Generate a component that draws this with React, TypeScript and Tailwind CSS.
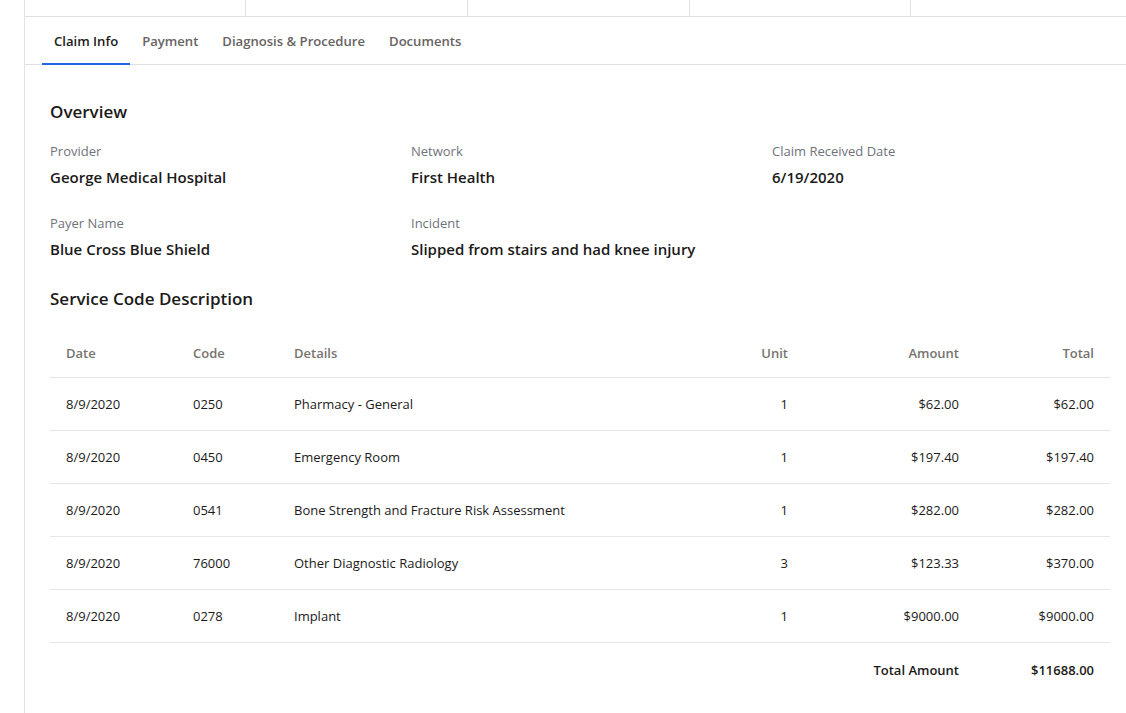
import React from "react";

const rows = [
  { date: "8/9/2020", code: "0250", details: "Pharmacy - General", unit: "1", amount: "$62.00", total: "$62.00" },
  { date: "8/9/2020", code: "0450", details: "Emergency Room", unit: "1", amount: "$197.40", total: "$197.40" },
  { date: "8/9/2020", code: "0541", details: "Bone Strength and Fracture Risk Assessment", unit: "1", amount: "$282.00", total: "$282.00" },
  { date: "8/9/2020", code: "76000", details: "Other Diagnostic Radiology", unit: "3", amount: "$123.33", total: "$370.00" },
  { date: "8/9/2020", code: "0278", details: "Implant", unit: "1", amount: "$9000.00", total: "$9000.00" },
];

const gridCols = "grid grid-cols-[127px_101px_1fr_104px_171px_135px]";

function Field({ label, value }: { label: string; value: string }) {
  return (
    <div className="flex flex-col">
      <div className="text-[13px] leading-[20px] text-[#6f737b]">{label}</div>
      <div className="mt-[4px] text-[15px] leading-[24px] font-semibold text-[#1b1a19]">{value}</div>
    </div>
  );
}

export default function App() {
  const tabs = ["Claim Info", "Payment", "Diagnosis & Procedure", "Documents"];
  return (
    <div
      className="flex h-[713px] w-[1126px] overflow-hidden bg-white text-[#201f1e]"
      style={{ fontFamily: '"Segoe UI", "Open Sans", "Noto Sans", sans-serif' }}
    >
      <div className="w-[25px] shrink-0 border-r border-[#e3e3e3]" />
      <div className="flex min-w-0 flex-1 flex-col">
        <div className="grid h-[17px] shrink-0 grid-cols-[221px_222px_222px_221px_1fr] border-b border-[#e1e1e1]">
          <div className="border-r border-[#e1e1e1]" />
          <div className="border-r border-[#e1e1e1]" />
          <div className="border-r border-[#e1e1e1]" />
          <div className="border-r border-[#e1e1e1]" />
          <div />
        </div>
        <div className="flex h-[48px] shrink-0 items-stretch border-b border-[#e1e1e1] pl-[17px]">
          {tabs.map((t, i) => (
            <div
              key={t}
              className={
                i === 0
                  ? "relative flex items-center px-3 pt-[2px] text-[13.1px] font-semibold text-[#1b1a19]"
                  : "relative flex items-center px-3 pt-[2px] text-[13.1px] font-semibold text-[#676361]"
              }
            >
              {t}
              {i === 0 && <div className="absolute bottom-[-1px] left-0 right-0 h-[2px] bg-[#2563eb]" />}
            </div>
          ))}
        </div>
        <div className="flex flex-col pl-[25px] pr-[16px]">
          <div className="mt-[35px] text-[17px] leading-[24px] font-semibold text-[#1b1a19]">Overview</div>
          <div className="mt-[17px] grid grid-cols-[361px_361px_1fr] gap-y-[24px]">
            <Field label="Provider" value="George Medical Hospital" />
            <Field label="Network" value="First Health" />
            <Field label="Claim Received Date" value="6/19/2020" />
            <Field label="Payer Name" value="Blue Cross Blue Shield" />
            <Field label="Incident" value="Slipped from stairs and had knee injury" />
          </div>
          <div className="mt-[26px] text-[17px] leading-[24px] font-semibold text-[#1b1a19]">Service Code Description</div>
          <div className="mt-[19px] flex flex-col">
            <div className={`${gridCols} h-[48px] items-center border-b border-[#e6e6e6] pt-[1px] text-[13px] font-semibold text-[#77736f]`}>
              <div className="pl-4">Date</div>
              <div className="pl-4">Code</div>
              <div className="pl-4">Details</div>
              <div className="pr-4 text-right">Unit</div>
              <div className="pr-4 text-right">Amount</div>
              <div className="pr-4 text-right">Total</div>
            </div>
            {rows.map((r, i) => (
              <div key={i} className={`${gridCols} h-[53px] items-center border-b border-[#e6e6e6] pt-[2px] text-[13px] text-[#1b1a19]`}>
                <div className="pl-4">{r.date}</div>
                <div className="pl-4">{r.code}</div>
                <div className="pl-4">{r.details}</div>
                <div className="pr-4 text-right">{r.unit}</div>
                <div className="pr-4 text-right">{r.amount}</div>
                <div className="pr-4 text-right">{r.total}</div>
              </div>
            ))}
            <div className={`${gridCols} h-[53px] items-center pt-[2px] text-[13px] font-semibold text-[#1b1a19]`}>
              <div />
              <div />
              <div />
              <div />
              <div className="pr-4 text-right">Total Amount</div>
              <div className="pr-4 text-right">$11688.00</div>
            </div>
          </div>
        </div>
      </div>
    </div>
  );
}
